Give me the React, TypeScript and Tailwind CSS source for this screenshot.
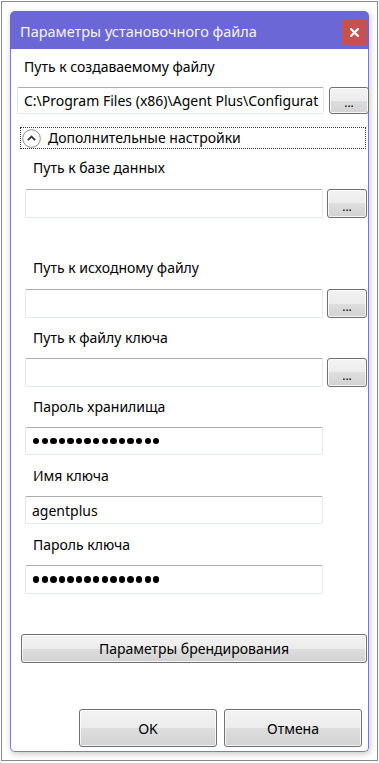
import React from 'react'

const font = { fontFamily: '"Noto Sans", "Open Sans", sans-serif' }

const btnFace =
    'rounded-[3px] border border-[#707070] bg-[linear-gradient(#f3f3f3_0%,#ececec_50%,#dedede_50%,#d2d2d2_100%)] shadow-[inset_0_0_0_1px_rgba(255,255,255,0.75)] text-black'

function BrowseButton() {
    return (
        <button className={`w-[40px] h-full shrink-0 ${btnFace} flex items-end justify-center pb-[4px] text-[12px] leading-none`}>
            ...
        </button>
    )
}

function Field({ value, password, width = 'w-[298px]' }: { value?: string; password?: boolean; width?: string }) {
    return (
        <div className={`${width} h-full shrink-0 bg-white border border-[#e3e9ef] border-t-[#abadb3] rounded-[2px] flex items-center px-[6px] overflow-hidden whitespace-nowrap text-[14px] text-black`}>
            {password ? (
                <span className="flex gap-[2.2px] pl-[1px]">
                    {Array.from({ length: 15 }).map((_, i) => (
                        <span key={i} className="w-[6.4px] h-[6.4px] rounded-full bg-black inline-block" />
                    ))}
                </span>
            ) : (
                value
            )}
        </div>
    )
}

function Label({ text, className }: { text: string; className: string }) {
    return <div className={`h-[20px] leading-[20px] text-[14px] text-black pl-[22px] ${className}`}>{text}</div>
}

export default function App() {
    return (
        <div className="w-[379px] h-[763px] bg-white pl-[1px] pt-[1px] pr-[1px] pb-[2px]" style={font}>
            <div className="w-full h-full border border-[#8a8a8a] bg-white pl-[8px] pt-[9px]">
                <div className="w-[359px] h-[741px] flex flex-col rounded-[5px] shadow-[1px_2px_6px_rgba(0,0,0,0.22)]">
                    {/* Title bar */}
                    <div className="h-[38px] shrink-0 bg-[#6c67d6] rounded-t-[5px] flex items-start justify-between">
                        <div className="pl-[10px] pt-[10px] text-[14.5px] leading-[20px] text-[#f6f5ff]">Параметры установочного файла</div>
                        <div className="mt-[9px] mr-[2px] w-[25px] h-[25px] bg-[#c8504f] flex items-center justify-center">
                            <svg width="9" height="9" viewBox="0 0 9 9">
                                <path d="M1 1 L8 8 M8 1 L1 8" stroke="#fff" strokeWidth="2.2" strokeLinecap="square" />
                            </svg>
                        </div>
                    </div>

                    {/* Body */}
                    <div className="flex-1 flex flex-col bg-white border border-t-0 border-[#7b76e3] rounded-b-[5px]">
                        <div className="mt-[8px] h-[20px] leading-[20px] text-[14px] text-black pl-[13px]">Путь к создаваемому файлу</div>
                        <div className="mt-[10px] h-[27px] flex pl-[6px] gap-[5px]">
                            <Field value="C:\Program Files (x86)\Agent Plus\Configurat" width="w-[307px]" />
                            <div className="w-[38px] h-full"><BrowseButton /></div>
                        </div>

                        {/* Expander header */}
                        <div className="mt-[13px] ml-[9px] mr-[2px] h-[22px] border border-dotted border-[#333] flex items-center pl-[1px]">
                            <svg width="19" height="19" viewBox="0 0 19 19">
                                <circle cx="9.5" cy="9.5" r="8.8" fill="#fff" stroke="#8e8e8e" strokeWidth="1" />
                                <path d="M5.8 11.2 L9.5 7.5 L13.2 11.2" fill="none" stroke="#3a3a3a" strokeWidth="1.9" />
                            </svg>
                            <span className="ml-[7px] text-[14px] leading-[20px] text-black">Дополнительные настройки</span>
                        </div>

                        <Label text="Путь к базе данных" className="mt-[9px]" />
                        <div className="mt-[11px] h-[29px] flex pl-[14px] gap-[4px]">
                            <Field />
                            <BrowseButton />
                        </div>

                        <Label text="Путь к исходному файлу" className="mt-[40px]" />
                        <div className="mt-[11px] h-[29px] flex pl-[14px] gap-[4px]">
                            <Field />
                            <BrowseButton />
                        </div>

                        <Label text="Путь к файлу ключа" className="mt-[10px]" />
                        <div className="mt-[10px] h-[29px] flex pl-[14px] gap-[4px]">
                            <Field />
                            <BrowseButton />
                        </div>

                        <Label text="Пароль хранилища" className="mt-[10px]" />
                        <div className="mt-[10px] h-[28px] flex pl-[14px]">
                            <Field password />
                        </div>

                        <Label text="Имя ключа" className="mt-[11px]" />
                        <div className="mt-[10px] h-[28px] flex pl-[14px]">
                            <Field value="agentplus" />
                        </div>

                        <Label text="Пароль ключа" className="mt-[11px]" />
                        <div className="mt-[10px] h-[29px] flex pl-[14px]">
                            <Field password />
                        </div>

                        <div className="mt-[40px] h-[29px] pl-[10px] pr-[1px]">
                            <button className={`w-full h-full ${btnFace} text-[14px]`}>
                                Параметры брендирования
                            </button>
                        </div>

                        <div className="mt-[46px] h-[38px] flex justify-end gap-[7px] pr-[6px]">
                            <button className={`w-[138px] h-full ${btnFace} text-[14px]`}>OK</button>
                            <button className={`w-[138px] h-full ${btnFace} text-[14px]`}>Отмена</button>
                        </div>
                    </div>
                </div>
            </div>
        </div>
    )
}
